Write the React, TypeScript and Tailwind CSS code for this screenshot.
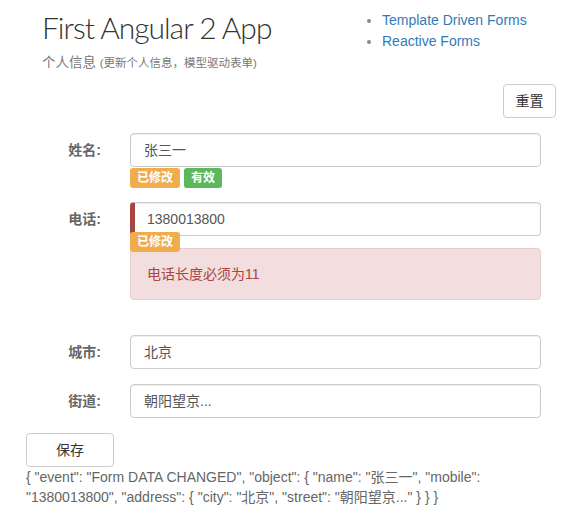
import React from "react";

const font = { fontFamily: '"Liberation Sans", "Noto Sans CJK SC", sans-serif' };

function Badge({ color, children }: { color: string; children: React.ReactNode }) {
  return (
    <span
      className={`relative z-10 inline-flex h-[20px] items-center rounded-[3px] px-[7px] text-[12px] font-bold leading-none text-white ${color}`}
    >
      {children}
    </span>
  );
}

function Row({ label, children, className = "" }: { label: string; children: React.ReactNode; className?: string }) {
  return (
    <div className={`flex ${className}`}>
      <div className="w-[104px] shrink-0 pr-[29px] text-right">
        <div className="flex h-[34px] items-center justify-end text-[14px] font-bold text-[#666]">{label}</div>
      </div>
      <div className="mr-[15px] flex-1">{children}</div>
    </div>
  );
}

function Input({ value, error = false }: { value: string; error?: boolean }) {
  return (
    <div
      className={`flex h-[34px] items-center rounded-[4px] border border-[#ccc] bg-white pr-3 text-[14px] text-[#555] shadow-[inset_0_1px_1px_rgba(0,0,0,0.075)] ${
        error ? "border-l-[5px] border-l-[#a94442] pl-[12px]" : "pl-[13px]"
      }`}
    >
      {value}
    </div>
  );
}

export default function App() {
  return (
    <div className="min-h-[518px] w-[564px] bg-white" style={font}>
      {/* header */}
      <div className="flex">
        <div className="w-[342px] shrink-0 pl-[42px]">
          <h1
            className="mt-[9px] h-[36px] text-[30px] font-light leading-[36px] tracking-[-1px] text-[#333]"
            style={{ fontFamily: '"Lato", "Liberation Sans", sans-serif' }}
          >
            First Angular 2 App
          </h1>
          <div className="mt-[9px] text-[13.5px] leading-[18px] text-[#777]">
            个人信息 <span className="text-[11.5px]">(更新个人信息，模型驱动表单)</span>
          </div>
        </div>
        <ul className="mt-[10px] list-disc pl-[40px] text-[14px] leading-[21px] text-[#337ab7] marker:text-[#888]">
          <li>Template Driven Forms</li>
          <li>Reactive Forms</li>
        </ul>
      </div>

      <div className="pl-[26px] pr-[8px]">
        <div className="mt-[12px] flex justify-end">
          <button className="h-[34px] w-[53px] rounded-[4px] border border-[#ccc] bg-white text-[14px] text-[#333]">
            重置
          </button>
        </div>

        <Row label="姓名:" className="mt-[15px]">
          <Input value="张三一" />
          <div className="mt-[1px] flex gap-[4px]">
            <Badge color="bg-[#f0ad4e]">已修改</Badge>
            <Badge color="bg-[#5cb85c]">有效</Badge>
          </div>
        </Row>

        <Row label="电话:" className="mt-[14px]">
          <Input value="1380013800" error />
          <div className="-mt-[4px] flex">
            <Badge color="bg-[#f0ad4e]">已修改</Badge>
          </div>
          <div className="-mt-[4px] rounded-[4px] border border-[#ebccd1] bg-[#f2dede] px-[16px] py-[15px] text-[14px] leading-[20px] text-[#a94442]">
            电话长度必须为11
          </div>
        </Row>

        <Row label="城市:" className="mt-[35px]">
          <Input value="北京" />
        </Row>

        <Row label="街道:" className="mt-[15px]">
          <Input value="朝阳望京..." />
        </Row>

        <button className="mt-[15px] h-[34px] w-[88px] rounded-[4px] border border-[#ccc] bg-white text-[14px] text-[#333]">
          保存
        </button>

        <div className="pr-[15px] text-[14px] leading-[20px] text-[#666]">
          {'{ "event": "Form DATA CHANGED", "object": { "name": "张三一", "mobile": "1380013800", "address": { "city": "北京", "street": "朝阳望京..." } } }'}
        </div>
      </div>
    </div>
  );
}
